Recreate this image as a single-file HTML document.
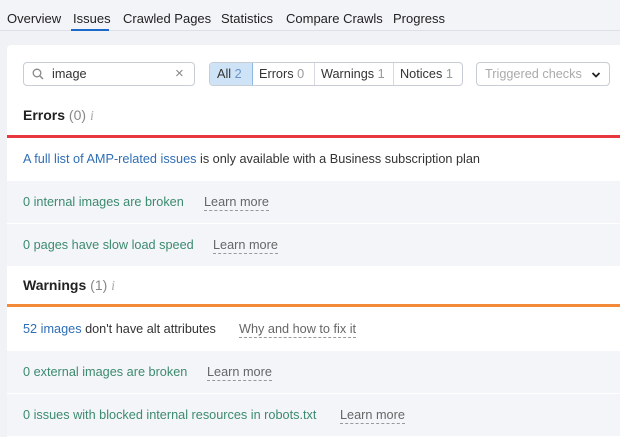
<!DOCTYPE html>
<html><head><style>
*{margin:0;padding:0;box-sizing:border-box}
body{width:620px;height:437px;overflow:hidden;background:#f0f2f6;font-family:"Liberation Sans",sans-serif;font-size:12.7px;color:#333;position:relative}
.tabs{position:absolute;top:0;left:0;width:620px;height:31px;border-bottom:1px solid #dde0e6;background:#f3f4f8}
.tab{position:absolute;top:11px;font-size:13px;color:#222}
.ul{position:absolute;left:71px;top:29px;width:38px;height:2px;background:#1b6ac9}
.panel{position:absolute;left:7px;top:45px;width:613px;height:392px;background:#fff;border-radius:4px 0 0 0}
.abs{position:absolute}
.row{position:absolute;left:7px;width:613px;height:42px;background:#f3f5f9}
.row span,.w{position:absolute;top:14px}
.g{color:#3d8a6e}
.b{color:#2f6eb5}
.lm{color:#666;border-bottom:1px dashed #999;padding-bottom:1px}
.box{position:absolute;top:62px;height:24px;border:1px solid #c8ccd4;border-radius:4px;background:#fff}
</style></head><body>
<div class="tabs">
<span class="tab" style="left:7px">Overview</span>
<span class="tab" style="left:73px">Issues</span>
<span class="tab" style="left:123px">Crawled Pages</span>
<span class="tab" style="left:221px">Statistics</span>
<span class="tab" style="left:286px">Compare Crawls</span>
<span class="tab" style="left:393px">Progress</span>
<div class="ul"></div>
</div>
<div class="panel"></div>
<div class="box" style="left:23px;width:172px">
<svg class="abs" style="left:8px;top:5px" width="12" height="12" viewBox="0 0 12 12"><circle cx="5" cy="5" r="3.8" fill="none" stroke="#888" stroke-width="1.3"/><path d="M8 8l3 3" stroke="#888" stroke-width="1.4"/></svg>
<span class="abs" style="left:28px;top:4px;color:#333">image</span>
<span class="abs" style="left:151px;top:2px;color:#888;font-size:15px">×</span>
</div>
<div class="box" style="left:209px;width:254px;overflow:hidden">
<div class="abs" style="left:0;top:0;width:43px;height:22px;background:#cfe3f7;border-right:1px solid #8fb8e3"></div>
<span class="abs" style="left:7px;top:4px">All <span style="color:#6b93c7">2</span></span>
<span class="abs" style="left:49px;top:4px">Errors <span style="color:#999">0</span></span>
<div class="abs" style="left:104px;top:0;width:1px;height:22px;background:#d6d9df"></div>
<span class="abs" style="left:111px;top:4px">Warnings <span style="color:#999">1</span></span>
<div class="abs" style="left:183px;top:0;width:1px;height:22px;background:#d6d9df"></div>
<span class="abs" style="left:190px;top:4px">Notices <span style="color:#999">1</span></span>
</div>
<div class="box" style="left:476px;width:134px"><span class="abs" style="left:8px;top:4px;color:#aaa">Triggered checks</span>
<svg class="abs" style="left:114px;top:8px" width="10" height="8" viewBox="0 0 10 8"><path d="M1.5 2l3.5 3.5 3.5-3.5" fill="none" stroke="#222" stroke-width="1.8"/></svg></div>
<div class="abs" style="left:23px;top:107px;font-size:14px"><b style="color:#222">Errors</b> <span style="color:#888">(0)</span> <i style="color:#aaa;font-family:'Liberation Serif'">i</i></div>
<div class="abs" style="left:7px;top:135px;width:613px;height:3px;background:#e8373f"></div>
<span class="w" style="left:23px;top:152px"><span class="b">A full list of AMP-related issues</span> is only available with a Business subscription plan</span>
<div class="row" style="top:181px"><span class="g" style="left:16px">0 internal images are broken</span><span class="lm" style="left:197px">Learn more</span></div>
<div class="row" style="top:224px"><span class="g" style="left:16px">0 pages have slow load speed</span><span class="lm" style="left:206px">Learn more</span></div>
<div class="abs" style="left:23px;top:277px;font-size:14px"><b style="color:#222">Warnings</b> <span style="color:#888">(1)</span> <i style="color:#aaa;font-family:'Liberation Serif'">i</i></div>
<div class="abs" style="left:7px;top:304px;width:613px;height:3px;background:#f28a3a"></div>
<span class="w" style="left:23px;top:322px"><span class="b">52 images</span> don't have alt attributes</span>
<span class="w lm" style="left:239px;top:322px">Why and how to fix it</span>
<div class="row" style="top:351px"><span class="g" style="left:16px">0 external images are broken</span><span class="lm" style="left:200px">Learn more</span></div>
<div class="row" style="top:394px"><span class="g" style="left:16px">0 issues with blocked internal resources in robots.txt</span><span class="lm" style="left:333px">Learn more</span></div>
</body></html>
